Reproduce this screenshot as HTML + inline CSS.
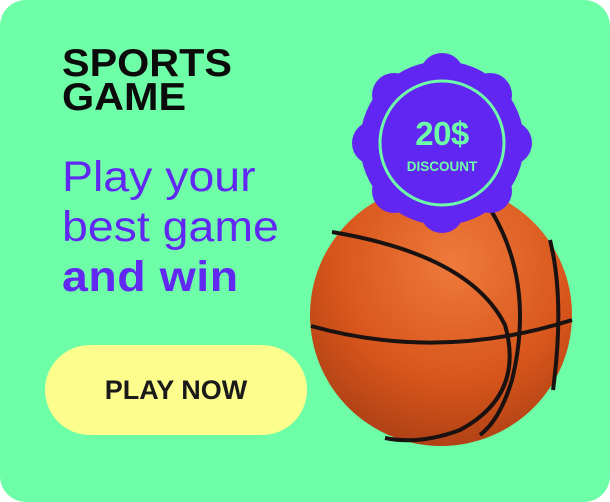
<!DOCTYPE html>
<html><head><style>
body{margin:0;width:610px;height:502px;background:#fff;overflow:hidden}
.card{position:absolute;left:0;top:0;width:610px;height:502px;background:#6ffea8;border-radius:26px;overflow:hidden;font-family:"Liberation Sans",sans-serif}
.t{position:absolute;left:62px;top:47px;font-weight:900;font-size:39px;line-height:34px;color:#0b0b0b;transform:scaleX(1.06);transform-origin:0 0}
.p{position:absolute;left:62px;top:152px;font-size:43px;line-height:50px;color:#6128f2;transform:scaleX(1.08);transform-origin:0 0;white-space:nowrap}
.p b{font-weight:900;letter-spacing:0.5px}
.btn{position:absolute;left:45px;top:345px;width:262px;height:90px;border-radius:45px;background:#fcfd8c;text-align:center;line-height:90px;font-weight:900;font-size:27px;color:#1a1a1a}
svg{position:absolute;left:0;top:0}
</style></head><body><div class="card">
<div class="t">SPORTS<br>GAME</div>
<div class="p">Play your<br>best game<br><b>and win</b></div>
<div class="btn">PLAY NOW</div>
<svg width="610" height="502">
<defs><radialGradient id="g" cx="0.55" cy="0.3" r="0.75"><stop offset="0" stop-color="#ee7a3c"/><stop offset="0.6" stop-color="#d8561c"/><stop offset="1" stop-color="#a93e14"/></radialGradient></defs>
<circle cx="441" cy="315" r="131" fill="url(#g)"/>
<g fill="none" stroke="#1a1210" stroke-width="4">
<path d="M332 232 Q470 255 505 325 Q525 395 460 430 Q420 445 385 438"/>
<path d="M311 326 Q440 362 572 320"/>
<path d="M492 212 Q535 285 512 380 Q500 420 480 435"/>
<path d="M550 240 Q565 300 553 390"/>
</g>
<g fill="#6226f2">
<circle cx="442" cy="143" r="82"/>
<circle cx="442" cy="75" r="22"/><circle cx="490" cy="95" r="22"/><circle cx="510" cy="143" r="22"/><circle cx="490" cy="191" r="22"/><circle cx="442" cy="211" r="22"/><circle cx="394" cy="191" r="22"/><circle cx="374" cy="143" r="22"/><circle cx="394" cy="95" r="22"/>
</g>
<circle cx="442" cy="143" r="62" fill="none" stroke="#6ffea8" stroke-width="3"/>
<text x="442" y="145" text-anchor="middle" fill="#6ffea8" font-family="Liberation Sans" font-weight="900" font-size="33" letter-spacing="-0.5">20$</text>
<text x="442" y="171" text-anchor="middle" fill="#6ffea8" font-family="Liberation Sans" font-weight="900" font-size="13.5">DISCOUNT</text>
</svg>
</div></body></html>
